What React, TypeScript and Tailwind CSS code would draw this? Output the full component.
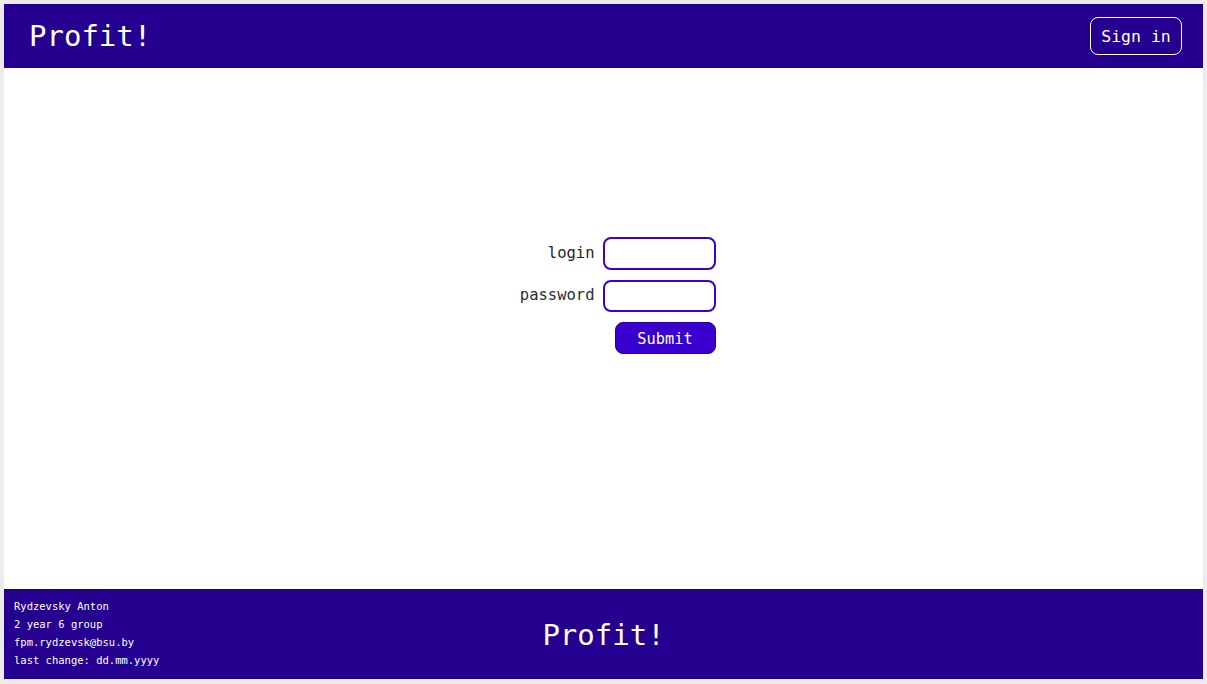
import React from 'react';

const mono = { fontFamily: '"DejaVu Sans Mono", "Liberation Mono", monospace' };

export default function App() {
  return (
    <div className="min-h-screen bg-[#ececec] p-[4px] pb-[5px] pr-[4px]" style={mono}>
      <div className="flex h-[675px] flex-col bg-white">
        {/* Header */}
        <header className="flex h-[64px] items-center justify-between bg-[#250090] pl-[25px] pr-[21px]">
          <h1 className="pt-[1px] text-[29px] leading-none text-white">Profit!</h1>
          <button className="h-[38px] w-[92px] rounded-[8px] border border-white pt-[3px] text-[16.5px] text-white">
            Sign in
          </button>
        </header>

        {/* Login form */}
        <main className="flex-1 pt-[169px]">
          <div className="flex pr-[10px]">
            <div className="flex flex-1 flex-col items-end gap-[10px] pr-[8px]">
              <label className="flex h-[33px] items-center text-[15.5px] text-[#2b2222]">login</label>
              <label className="flex h-[32px] items-center text-[15.5px] text-[#22303a]">password</label>
            </div>
            <div className="flex flex-1 flex-col gap-[10px]">
              <input className="h-[33px] w-[113px] rounded-[8px] border-2 border-[#3a00d0] outline-none" />
              <input className="h-[32px] w-[113px] rounded-[8px] border-2 border-[#3a00d0] outline-none" />
              <div className="flex w-[113px] justify-end">
                <button className="h-[32px] w-[101px] rounded-[8px] border border-[#2a0090] bg-[#3a00d0] pt-[2px] text-[15.3px] text-white">
                  Submit
                </button>
              </div>
            </div>
          </div>
        </main>

        {/* Footer */}
        <footer className="relative flex h-[90px] items-center justify-center bg-[#250090]">
          <div className="absolute left-[10px] top-[8px] text-[10.5px] leading-[18px] text-white">
            <div>Rydzevsky Anton</div>
            <div>2 year 6 group</div>
            <div>fpm.rydzevsk@bsu.by</div>
            <div>last change: dd.mm.yyyy</div>
          </div>
          <span className="pt-[2px] text-[29px] leading-none text-white">Profit!</span>
        </footer>
      </div>
    </div>
  );
}
